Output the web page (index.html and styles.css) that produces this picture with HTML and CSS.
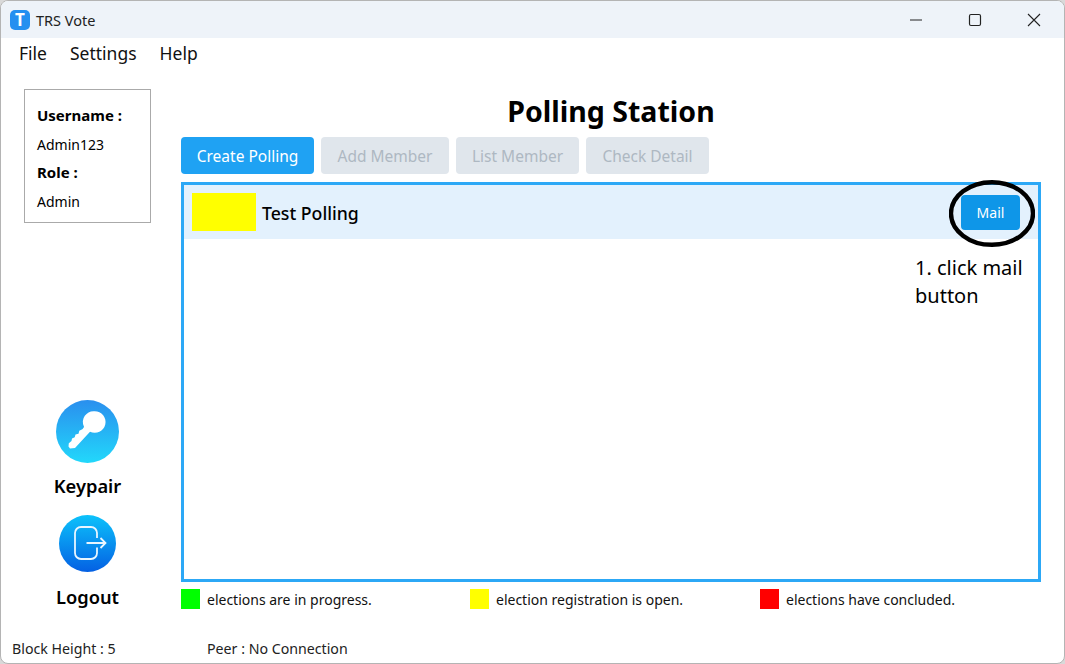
FILE: index.html
```html
<!DOCTYPE html>
<html>
<head>
    <title>TRS Vote</title>
    <link rel="stylesheet" href="styles.css">
</head>
<body>
    <div class="window">
        <div class="titlebar">
            <div class="app-name">
                <span class="app-logo">T</span>
                <span>TRS Vote</span>
            </div>
            <div class="win-controls">
                <svg width="14" height="14" viewBox="0 0 14 14"><path d="M1 7h12" stroke="#222" fill="none"/></svg>
                <svg width="14" height="14" viewBox="0 0 14 14"><rect x="1.5" y="1.5" width="11" height="11" rx="1.5" stroke="#222" stroke-width="1.2" fill="none"/></svg>
                <svg width="14" height="14" viewBox="0 0 14 14"><path d="M1 1l12 12M13 1L1 13" stroke="#222" stroke-width="1.1" fill="none"/></svg>
            </div>
        </div>

        <div class="menubar">
            <span>File</span>
            <span>Settings</span>
            <span>Help</span>
        </div>

        <div class="content">
            <div class="sidebar">
                <div class="user-box">
                    <p class="user-label">Username :</p>
                    <p>Admin123</p>
                    <p class="user-label">Role :</p>
                    <p>Admin</p>
                </div>

                <div class="side-actions">
                    <div class="side-action">
                        <svg width="63" height="63" viewBox="0 0 63 63">
                            <defs>
                                <linearGradient id="keyGrad" x1="0" y1="0" x2="0" y2="1">
                                    <stop offset="0" stop-color="#2a8fee"/>
                                    <stop offset="1" stop-color="#22d8fb"/>
                                </linearGradient>
                            </defs>
                            <circle cx="31.5" cy="31.5" r="31.5" fill="url(#keyGrad)"/>
                            <path d="M38.7 11.2A10.8 10.8 0 1 1 34 31.7L19 48l-5 .5-1.500-2 .3-3.300L15.500 41l.5-2.500 2.700-1.300.8-2.700 3-.8.8-3 3-1.500c.7-.8 1.500-1.500 1.700-2.500A10.8 10.8 0 0 1 38.700 11.200z" fill="#fff"/>
                        </svg>
                        <span class="side-label">Keypair</span>
                    </div>
                    <div class="side-action">
                        <svg class="logout-icon" width="57" height="57" viewBox="0 0 57 57">
                            <defs>
                                <linearGradient id="logoutGrad" x1="0" y1="0" x2="0" y2="1">
                                    <stop offset="0" stop-color="#0cc2fb"/>
                                    <stop offset="1" stop-color="#0460e3"/>
                                </linearGradient>
                            </defs>
                            <circle cx="28.5" cy="28.5" r="28.5" fill="url(#logoutGrad)"/>
                            <path d="M38 23v-5a6 6 0 0 0-6-6H22a6 6 0 0 0-6 6v20a6 6 0 0 0 6 6h10a6 6 0 0 0 6-6v-5.500" stroke="#e8f5ff" stroke-width="1.8" fill="none"/>
                            <path d="M27.500 28h18M41.500 23l5 5-5 5" stroke="#e8f5ff" stroke-width="1.8" fill="none"/>
                        </svg>
                        <span class="side-label">Logout</span>
                    </div>
                </div>
            </div>

            <div class="main">
                <h1 class="page-title">Polling Station</h1>
                <div class="toolbar">
                    <button class="btn btn-active">Create Polling</button>
                    <button class="btn btn-disabled">Add Member</button>
                    <button class="btn btn-disabled">List Member</button>
                    <button class="btn btn-disabled">Check Detail</button>
                </div>

                <div class="poll-list">
                    <div class="poll-row">
                        <span class="poll-status"></span>
                        <span class="poll-name">Test Polling</span>
                        <button class="mail-btn">Mail</button>
                    </div>
                    <svg class="mail-circle" width="86" height="67" viewBox="0 0 86 67">
                        <ellipse cx="43" cy="33.5" rx="41" ry="31.3" stroke="#000" stroke-width="4.4" fill="none"/>
                    </svg>
                    <div class="note">1. click mail<br>button</div>
                </div>

                <div class="legend">
                    <div class="legend-item"><span class="swatch swatch-green"></span>elections are in progress.</div>
                    <div class="legend-item"><span class="swatch swatch-yellow"></span>election registration is open.</div>
                    <div class="legend-item"><span class="swatch swatch-red"></span>elections have concluded.</div>
                </div>
            </div>
        </div>

        <div class="statusbar">
            <span class="status-height">Block Height : 5</span>
            <span>Peer : No Connection</span>
        </div>
    </div>
</body>
</html>
```

FILE: styles.css
```css
* {
    box-sizing: border-box;
}
html, body {
    margin: 0;
    height: 664px;
    overflow: hidden;
    background-color: #d9d9d9;
}
body {
    font-family: "Noto Sans", "Open Sans", sans-serif;
    color: #000;
}
.window {
    width: 1065px;
    height: 664px;
    display: flex;
    flex-direction: column;
    background-color: #fff;
    border: 1px solid #b4b4b4;
    border-radius: 8px;
    overflow: hidden;
}
.titlebar {
    height: 37px;
    flex: none;
    display: flex;
    align-items: center;
    justify-content: space-between;
    background-color: #eef3f9;
}
.app-name {
    display: flex;
    align-items: center;
    gap: 6px;
    padding-left: 9px;
    font-size: 14.5px;
    color: #222;
}
.app-logo {
    width: 20px;
    height: 20px;
    display: flex;
    align-items: center;
    justify-content: center;
    background-color: #2490f0;
    border-radius: 5px;
    color: #fff;
    font-size: 17px;
    font-weight: 700;
}
.win-controls {
    display: flex;
    align-items: center;
    gap: 45px;
    padding-right: 23px;
}
.menubar {
    height: 30px;
    flex: none;
    display: flex;
    align-items: center;
    gap: 23px;
    padding-left: 18px;
    font-size: 17.5px;
    color: #111;
}
.content {
    flex: 1;
    display: flex;
    min-height: 0;
}
.sidebar {
    width: 180px;
    flex: none;
    display: flex;
    flex-direction: column;
    justify-content: space-between;
    padding: 21px 0 22px 23px;
}
.user-box {
    width: 127px;
    height: 134px;
    padding: 11px 0 0 12px;
    border: 1px solid #aaa;
    font-size: 14px;
}
.user-box p {
    margin: 0;
    height: 28.7px;
    line-height: 29px;
}
.user-box .user-label {
    font-size: 15px;
    font-weight: 700;
    color: #000;
}
.side-actions {
    width: 127px;
    display: flex;
    flex-direction: column;
    align-items: center;
    gap: 15px;
}
.side-action {
    display: flex;
    flex-direction: column;
    align-items: center;
}
.side-label {
    margin-top: 9px;
    font-size: 18.3px;
    line-height: 28px;
    font-weight: 600;
}
.logout-icon {
    margin-bottom: 2px;
}
.main {
    flex: 1;
    min-width: 0;
    padding-right: 23px;
}
.page-title {
    margin: 21px 0 0;
    height: 48px;
    line-height: 45px;
    font-size: 28.5px;
    font-weight: 700;
    text-align: center;
}
.toolbar {
    display: flex;
    gap: 7px;
}
.btn {
    height: 37px;
    padding: 0;
    border: none;
    border-radius: 4px;
    font-family: inherit;
    font-size: 15.5px;
}
.btn-active {
    width: 133px;
    background-color: #1fa2f3;
    color: #fff;
}
.btn-disabled {
    background-color: #e0e6ec;
    color: #aeb8c2;
}
.btn-disabled:nth-child(2) {
    width: 128px;
}
.btn-disabled:nth-child(3) {
    width: 123px;
}
.btn-disabled:nth-child(4) {
    width: 123px;
}
.poll-list {
    position: relative;
    height: 400px;
    margin-top: 8px;
    border: 3px solid #2ca8f6;
}
.poll-row {
    height: 54px;
    display: flex;
    align-items: center;
    padding: 0 18px 0 8px;
    background-color: #e3f1fd;
}
.poll-status {
    width: 64px;
    height: 38px;
    background-color: #ff0;
}
.poll-name {
    flex: 1;
    margin: 2px 0 0 6px;
    font-size: 17.7px;
    font-weight: 500;
}
.mail-btn {
    width: 59px;
    height: 35px;
    padding: 0;
    border: none;
    border-radius: 4px;
    background-color: #0e96e8;
    color: #fff;
    font-family: inherit;
    font-size: 14px;
}
.mail-circle {
    position: absolute;
    top: -5px;
    right: 3px;
}
.note {
    position: absolute;
    top: 69px;
    left: 731px;
    font-size: 20px;
    line-height: 28px;
}
.legend {
    display: grid;
    grid-template-columns: 289px 290px 1fr;
    margin-top: 7px;
    font-size: 14px;
}
.legend-item {
    display: flex;
    align-items: center;
    gap: 7px;
    color: #111;
}
.swatch {
    width: 19px;
    height: 20px;
}
.swatch-green {
    background-color: #0f0;
}
.swatch-yellow {
    background-color: #ff0;
}
.swatch-red {
    background-color: #f00;
}
.statusbar {
    height: 30px;
    flex: none;
    display: flex;
    align-items: center;
    padding-left: 11px;
    font-size: 14.2px;
    color: #222;
}
.status-height {
    width: 195px;
}
```
